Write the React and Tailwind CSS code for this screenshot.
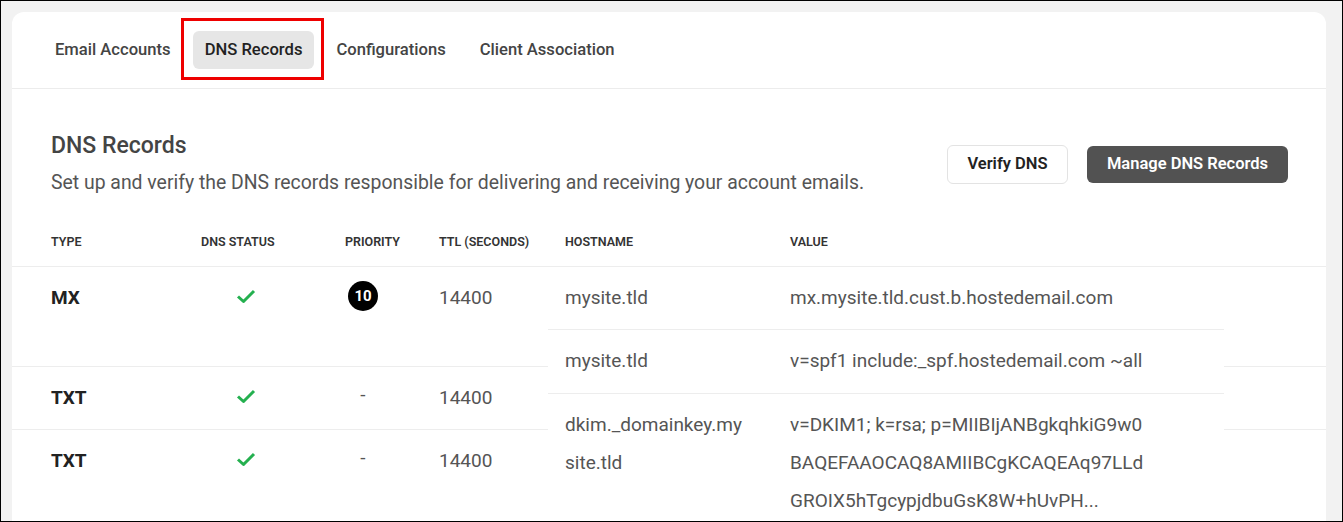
import React from 'react';

const tabs = ['Email Accounts', 'DNS Records', 'Configurations', 'Client Association'];

// left part of each record row (type, status, priority, ttl)
const records = [
    { type: 'MX', priority: '10', ttl: '14400', h: 'h-[100px] border-b' },
    { type: 'TXT', priority: null, ttl: '14400', h: 'h-[63px] border-b' },
    { type: 'TXT', priority: null, ttl: '14400', h: 'flex-1' },
];

// hostname / value block, rendered as its own stack
const hosts = [
    { host: ['mysite.tld'], value: ['mx.mysite.tld.cust.b.hostedemail.com'], cls: 'pb-[12px] border-b' },
    { host: ['mysite.tld'], value: ['v=spf1 include:_spf.hostedemail.com ~all'], cls: 'pb-[13px] border-b' },
    {
        host: ['dkim._domainkey.my', 'site.tld'],
        value: ['v=DKIM1; k=rsa; p=MIIBIjANBgkqhkiG9w0', 'BAQEFAAOCAQ8AMIIBCgKCAQEAq97LLd', 'GROIX5hTgcypjdbuGsK8W+hUvPH...'],
        cls: 'pb-3',
    },
];

const CheckMark = () => (
    <svg width="20" height="15" viewBox="0 0 20 15" fill="none">
        <path d="M2 7.5 7.5 12.5 18 2" stroke="#24b04f" strokeWidth="3" strokeLinejoin="round" />
    </svg>
);

const App = () => {
    return (
        <div className="w-[1343px] h-[522px] bg-[#f2f2f2] border border-black overflow-hidden pt-[11px] pl-[11px] pr-[16px] font-['Roboto',sans-serif]">
            <div className="bg-white rounded-t-xl h-full flex flex-col">
                {/* Tabs */}
                <div className="h-[77px] shrink-0 border-b border-[#ececec] flex items-center pl-[31px] gap-[10px]">
                    {tabs.map((t) => (
                        <div key={t} className="relative">
                            <div className={`h-[38px] px-3 flex items-center rounded-md text-[16.6px] font-medium ${t === 'DNS Records' ? 'bg-[#e6e6e6] text-[#222]' : 'text-[#444]'}`}>
                                {t}
                            </div>
                            {t === 'DNS Records' && (
                                <div className="absolute -left-3 -right-2.5 -top-[13px] -bottom-[11px] border-[3px] border-[#ee0000] pointer-events-none"></div>
                            )}
                        </div>
                    ))}
                </div>

                {/* Section header */}
                <div className="flex justify-between items-start pt-[42px] pl-[39px] pr-[38px]">
                    <div>
                        <h2 className="text-[23px] leading-[30px] font-medium text-[#444]">DNS Records</h2>
                        <p className="mt-[10px] text-[19.4px] leading-6 text-[#555]">
                            Set up and verify the DNS records responsible for delivering and receiving your account emails.
                        </p>
                    </div>
                    <div className="flex items-center gap-[19px] mt-[14px]">
                        <button className="h-[39px] w-[121px] rounded-md border border-[#e3e3e3] text-[16.5px] font-semibold text-[#222]">
                            Verify DNS
                        </button>
                        <button className="h-[37px] w-[201px] rounded-md bg-[#525252] text-[16.5px] font-semibold text-white">
                            Manage DNS Records
                        </button>
                    </div>
                </div>

                {/* Table header */}
                <div className="flex pt-[39px] pb-[16px] border-b border-[#ededed] text-[12.5px] leading-4 font-semibold uppercase text-[#333]">
                    <div className="w-[536px] shrink-0 grid grid-cols-[189px_144px_94px_109px]">
                        <span className="pl-[39px]">Type</span>
                        <span>DNS Status</span>
                        <span>Priority</span>
                        <span>TTL (Seconds)</span>
                    </div>
                    <div className="w-[676px] shrink-0 flex">
                        <span className="w-[242px] pl-[17px]">Hostname</span>
                        <span>Value</span>
                    </div>
                </div>

                {/* Table body */}
                <div className="flex flex-1 min-h-0 text-[19px] text-[#555]">
                    <div className="w-[536px] shrink-0 flex flex-col">
                        {records.map((r, i) => (
                            <div key={i} className={`grid grid-cols-[189px_144px_94px_109px] border-[#ededed] pt-[12px] ${r.h}`}>
                                <div className="pl-[39px] leading-[38px] font-bold text-[#222]">{r.type}</div>
                                <div className="pl-[35px] pt-[10px]">
                                    <CheckMark />
                                </div>
                                <div className="pl-[3px]">
                                    {r.priority ? (
                                        <div className="mt-[2px] w-[30px] h-[30px] rounded-full bg-black text-white text-[15px] font-bold flex items-center justify-center">
                                            {r.priority}
                                        </div>
                                    ) : (
                                        <div className="w-[30px] text-center leading-[32px]">-</div>
                                    )}
                                </div>
                                <div className="leading-[38px]">{r.ttl}</div>
                            </div>
                        ))}
                    </div>

                    <div className="w-[676px] shrink-0 bg-white flex flex-col">
                        {hosts.map((h, i) => (
                            <div key={i} className={`flex pt-[12px] border-[#ededed] ${h.cls}`}>
                                <div className="w-[242px] pl-[17px] leading-[38px]">
                                    {h.host.map((l) => (
                                        <div key={l}>{l}</div>
                                    ))}
                                </div>
                                <div className="leading-[38px]">
                                    {h.value.map((l) => (
                                        <div key={l}>{l}</div>
                                    ))}
                                </div>
                            </div>
                        ))}
                    </div>

                    <div className="flex-1 flex flex-col">
                        <div className="h-[100px] border-b border-[#ededed]"></div>
                        <div className="h-[63px] border-b border-[#ededed]"></div>
                    </div>
                </div>
            </div>
        </div>
    );
};

export default App;
